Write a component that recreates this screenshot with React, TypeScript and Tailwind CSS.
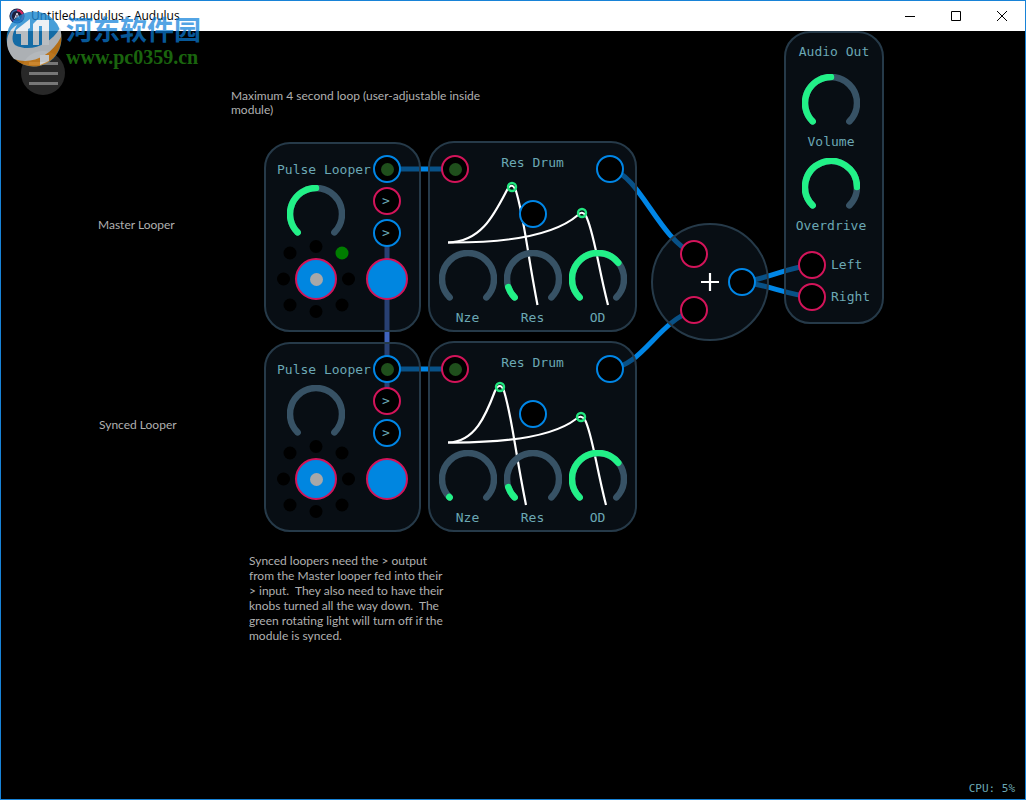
import React from 'react';

type PortKind = 'in' | 'out';

const BLUE = '#0086e6';
const PURPLE = '#4064be';

// Patch cables, drawn underneath the modules
const WIRES = [
  { d: 'M387 169 H455', color: BLUE },
  { d: 'M387 369 H455', color: BLUE },
  { d: 'M387 233 V402', color: PURPLE },
  { d: 'M610 169 C640 175 658 238 694 254', color: BLUE },
  { d: 'M610 369 C642 366 658 322 694 310', color: BLUE },
  { d: 'M742 282 C765 280 788 267 812 265', color: BLUE },
  { d: 'M742 282 C765 284 788 295 812 297', color: BLUE },
];

const LEDS = [
  [39, 6.5], [65, 13], [71.5, 39], [65, 65], [39, 71.5], [13, 65], [6.5, 39], [13, 13],
];

// Point on the knob's 270 degree track, value from 0 to 1
const knobPoint = (value: number) => {
  const angle = ((135 + value * 270) * Math.PI) / 180;
  return `${(29 + 26 * Math.cos(angle)).toFixed(2)} ${(29 + 26 * Math.sin(angle)).toFixed(2)}`;
};

const knobArc = (value: number) =>
  `M${knobPoint(0)} A26 26 0 ${value * 270 > 180 ? 1 : 0} 1 ${knobPoint(value)}`;

const Knob: React.FC<{ name: string; value: number; showLabel?: boolean }> = ({ name, value, showLabel = true }) => (
  <label className="flex w-[58px] flex-col items-center gap-[9px]">
    <span className="relative block">
      <svg className="block h-[51px] w-[58px]" viewBox="0 0 58 51" fill="none" strokeWidth="6.5" strokeLinecap="round">
        <path d={knobArc(1)} stroke="#375265" />
        {value > 0 && <path d={knobArc(value)} stroke="#22f187" />}
      </svg>
      <input
        type="range"
        min={0}
        max={1}
        step={0.001}
        defaultValue={value}
        aria-label={name}
        className="absolute inset-0 h-full w-full cursor-pointer opacity-0"
      />
    </span>
    {showLabel && <span className="whitespace-nowrap">{name}</span>}
  </label>
);

const Port: React.FC<{ kind: PortKind; label: string; lit?: boolean; children?: React.ReactNode }> = ({
  kind,
  label,
  lit,
  children,
}) => (
  <button
    aria-label={label}
    className={`flex h-7 w-7 shrink-0 items-center justify-center rounded-full border-2 bg-black pr-[2px] ${
      kind === 'in' ? 'border-[#d3145a]' : 'border-[#0086e6]'
    }`}
  >
    {lit && <span className="ml-[2px] h-[13px] w-[13px] rounded-full bg-[#1f4f1c]" />}
    {children}
  </button>
);

const MODULE = 'absolute border-2 border-[#263a49] bg-[#101b28]/50';

const PulseLooper: React.FC<{ place: string; knob: number; activeLed?: number }> = ({ place, knob, activeLed }) => (
  <section className={`${MODULE} ${place} flex h-[190px] w-[157px] rounded-[26px] pl-[11px]`}>
    <div className="w-[89px] pt-[18px]">
      <h2 className="whitespace-nowrap">Pulse Looper</h2>
      <div className="mt-[7px] pl-[10px]">
        <Knob name="Loop length" value={knob} showLabel={false} />
      </div>
      <div className="mt-1 grid w-[78px] place-items-center">
        <svg className="col-start-1 row-start-1 h-[78px] w-[78px]" viewBox="0 0 78 78">
          {LEDS.map(([cx, cy], i) => (
            <circle key={i} cx={cx} cy={cy} r="6.5" fill={i === activeLed ? '#007d00' : '#000'} />
          ))}
        </svg>
        <button
          aria-label="Record"
          className="col-start-1 row-start-1 flex h-[42px] w-[42px] items-center justify-center rounded-full border-2 border-[#d3145a] bg-[#0086e0]"
        >
          <span className="h-[13px] w-[13px] rounded-full bg-[#a8a8a8]" />
        </button>
      </div>
    </div>
    <div className="flex w-[42px] flex-col items-center gap-1 pt-[11px]">
      <Port kind="out" label="Pulse output" lit />
      <Port kind="in" label="Sync input">&gt;</Port>
      <Port kind="out" label="Sync output">&gt;</Port>
      <button
        aria-label="Clear"
        className="mt-[7px] h-[42px] w-[42px] rounded-full border-2 border-[#d3145a] bg-[#0086e0]"
      />
    </div>
  </section>
);

interface DrumProps {
  place: string;
  curves: string[];
  peaks: number[][];
  noise: number;
}

const ResDrum: React.FC<DrumProps> = ({ place, curves, peaks, noise }) => (
  <section className={`${MODULE} ${place} h-[191px] w-[209px] rounded-[26px]`}>
    {/* Resonance curves, the controls lie on top */}
    <svg className="absolute inset-0 h-[187px] w-[205px]" viewBox="430 143 205 187" fill="none">
      {curves.map((d) => (
        <path key={d} d={d} stroke="#fff" strokeWidth="2.2" />
      ))}
      {peaks.map(([cx, cy]) => (
        <circle key={cx} cx={cx} cy={cy} r="4" stroke="#22e57f" strokeWidth="2.4" />
      ))}
    </svg>
    <div className="relative flex flex-col items-center pt-3">
      <div className="flex w-full items-start justify-between px-[11px]">
        <Port kind="in" label="Trigger input" lit />
        <h2>Res Drum</h2>
        <Port kind="out" label="Audio output" />
      </div>
      <div className="mt-[17px]">
        <Port kind="out" label="Envelope output" />
      </div>
      <div className="mt-[22px] flex gap-[7px]">
        <Knob name="Nze" value={noise} />
        <Knob name="Res" value={0.1} />
        <Knob name="OD" value={0.69} />
      </div>
    </div>
  </section>
);

const Mixer = () => (
  <section className={`${MODULE} left-[650px] top-[192px] flex h-[118px] w-[118px] items-center rounded-full pl-[27px]`}>
    <div className="flex flex-col gap-7">
      <Port kind="in" label="Mixer input 1" />
      <Port kind="in" label="Mixer input 2" />
    </div>
    <svg className="-ml-[7px] mr-[9px] h-[18px] w-[18px] shrink-0" viewBox="0 0 18 18" stroke="#fff" strokeWidth="2.2">
      <path d="M0 9 H18 M9 0 V18" />
    </svg>
    <Port kind="out" label="Mixer output" />
  </section>
);

const AudioOut = () => (
  <section className={`${MODULE} left-[783px] top-0 h-[293px] w-[100px] rounded-[26px] pt-[11px]`}>
    <h2 className="text-center">Audio Out</h2>
    <div className="mt-[14px] flex flex-col gap-2 pl-4">
      <Knob name="Volume" value={0.5} />
      <Knob name="Overdrive" value={0.833} />
    </div>
    <div className="mt-[17px] flex flex-col gap-1 pl-3">
      {['Left', 'Right'].map((side) => (
        <div key={side} className="flex items-center gap-[5px]">
          <Port kind="in" label={side} />
          <span>{side}</span>
        </div>
      ))}
    </div>
  </section>
);

const TitleBar = () => (
  <header className="flex h-[30px] items-center bg-white pl-2 text-black">
    <svg className="h-4 w-4" viewBox="0 0 16 16" fill="none">
      <circle cx="8" cy="8" r="7.6" fill="#1b1e3c" />
      <path d="M8 2.2 A5.8 5.8 0 0 1 12.5 11.8" stroke="#d8265f" strokeWidth="2" />
      <path d="M12.5 11.8 A5.8 5.8 0 0 1 3.5 11.8" stroke="#5b3fb0" strokeWidth="1.6" />
      <path d="M3.5 11.8 A5.8 5.8 0 0 1 8 2.2" stroke="#3568a8" strokeWidth="1.6" />
      <path d="M5.6 10.8 L8 5 L10.4 10.8 M6.6 9 H9.4" stroke="#dfe3f2" strokeWidth="1" />
    </svg>
    <h1 className="ml-[6px] flex-1 font-['Open_Sans',sans-serif] text-[12px] leading-4">Untitled.audulus - Audulus</h1>
    <button aria-label="Minimize" className="flex h-full w-[46px] items-center justify-center">
      <svg className="h-[10px] w-[10px]" viewBox="0 0 10 10" stroke="#000" fill="none"><path d="M0 5.5 H10" /></svg>
    </button>
    <button aria-label="Maximize" className="flex h-full w-[46px] items-center justify-center">
      <svg className="h-[10px] w-[10px]" viewBox="0 0 10 10" stroke="#000" fill="none"><path d="M.5 .5 H9.5 V9.5 H.5 Z" /></svg>
    </button>
    <button aria-label="Close" className="flex h-full w-[46px] items-center justify-center">
      <svg className="h-[10px] w-[10px]" viewBox="0 0 10 10" stroke="#000" fill="none"><path d="M0 0 L10 10 M10 0 L0 10" /></svg>
    </button>
  </header>
);

// Site badge laid over the window corner
const Watermark = () => (
  <div className="pointer-events-none absolute left-[5px] top-[10px] flex items-start gap-1">
    <svg className="h-14 w-14 shrink-0 opacity-80" viewBox="0 0 56 56">
      <circle cx="28" cy="28" r="27.5" fill="#1a86cf" />
      <path d="M55 22 C58 40 44 56 27 55.5 C16 55 10 50 6 44 C26 50 44 40 55 22 Z" fill="#e08a1c" />
      <path d="M1 31 C1 24 5 17 11 14 C6 22 5 30 9 34 C24 42 44 34 54 17 C55 20 55.5 23 55 26 C45 46 24 54 8 48 C3 42 1 37 1 31 Z" fill="#d8dde2" />
      <path d="M24 8 L10 19 V23 H15 V34 H22 V18 L24 17 Z" fill="#e8edf2" />
      <path d="M27 13 L31 9 H43 V34 H36 V15 H33 V34 H27 Z" fill="#e8edf2" />
      <path d="M34 44 H43 V50 L34 54 Z" fill="#e8edf2" />
    </svg>
    <div className="flex flex-col whitespace-nowrap font-bold opacity-70">
      <span className="mt-[2px] font-['Noto_Sans_CJK_SC',sans-serif] text-[27px] leading-8 text-[#0b7ed9]">河东软件园</span>
      <span className="font-['Liberation_Serif',serif] text-[20px] leading-6 text-[#258f14]">www.pc0359.cn</span>
    </div>
  </div>
);

const NOTE = "absolute font-['Lato',sans-serif] text-[12px] text-[#b0b0b0]";

export default function App() {
  return (
    <div className="relative flex min-h-screen flex-col border border-[#1883d7] bg-black">
      <TitleBar />
      <main className="relative flex flex-1 flex-col items-end justify-end overflow-hidden bg-black font-['DejaVu_Sans_Mono',monospace] text-[13px] leading-4 text-[#6ba8b4]">
        <svg className="absolute left-0 top-0 h-[520px] w-[900px]" viewBox="1 31 900 520" fill="none" strokeWidth="5">
          {WIRES.map(({ d, color }) => (
            <path key={d} d={d} stroke={color} />
          ))}
        </svg>

        <button
          aria-label="Menu"
          className="absolute left-5 top-5 flex h-11 w-11 flex-col items-center justify-center gap-[7px] rounded-full bg-[#282828]"
        >
          <span className="h-[3px] w-[29px] bg-[#777]" />
          <span className="h-[3px] w-[29px] bg-[#777]" />
          <span className="h-[3px] w-[29px] bg-[#777]" />
        </button>

        <p className={`${NOTE} left-[230px] top-[58px] w-[260px] leading-[14px]`}>
          Maximum 4 second loop (user-adjustable inside module)
        </p>
        <p className={`${NOTE} left-[97px] top-[186px] leading-4`}>Master Looper</p>
        <p className={`${NOTE} left-[98px] top-[386px] leading-4`}>Synced Looper</p>
        <p className={`${NOTE} left-[248px] top-[522px] whitespace-pre leading-[15px]`}>
          {`Synced loopers need the > output
from the Master looper fed into their
> input.  They also need to have their
knobs turned all the way down.  The
green rotating light will turn off if the
module is synced.`}
        </p>

        <PulseLooper place="left-[263px] top-[111px]" knob={0.5} activeLed={1} />
        <PulseLooper place="left-[263px] top-[311px]" knob={0} />
        <ResDrum
          place="left-[427px] top-[110px]"
          noise={0}
          curves={[
            'M448 242.500 C481 242 494 215 507 190 Q512 181 516 191 C524 217 526 245 537.500 305',
            'M448 242.500 C510 243 556 234 578 215 Q582 210 586 216 C594 232 598 266 608 305',
          ]}
          peaks={[[512, 187], [582, 213]]}
        />
        <ResDrum
          place="left-[427px] top-[310px]"
          noise={0.004}
          curves={[
            'M448 242.500 C475 242 486 215 495 191 Q500 181 504 191 C512 217 514 245 526 305',
            'M448 242.500 C508 243 554 236 576 219 Q581 214 585 220 C592 233 596 266 606 305',
          ]}
          peaks={[[500, 187], [581, 217]]}
        />
        <Mixer />
        <AudioOut />

        <p className="pb-[2px] pr-[10px] text-[11px]">CPU: 5%</p>
      </main>
      <Watermark />
    </div>
  );
}
